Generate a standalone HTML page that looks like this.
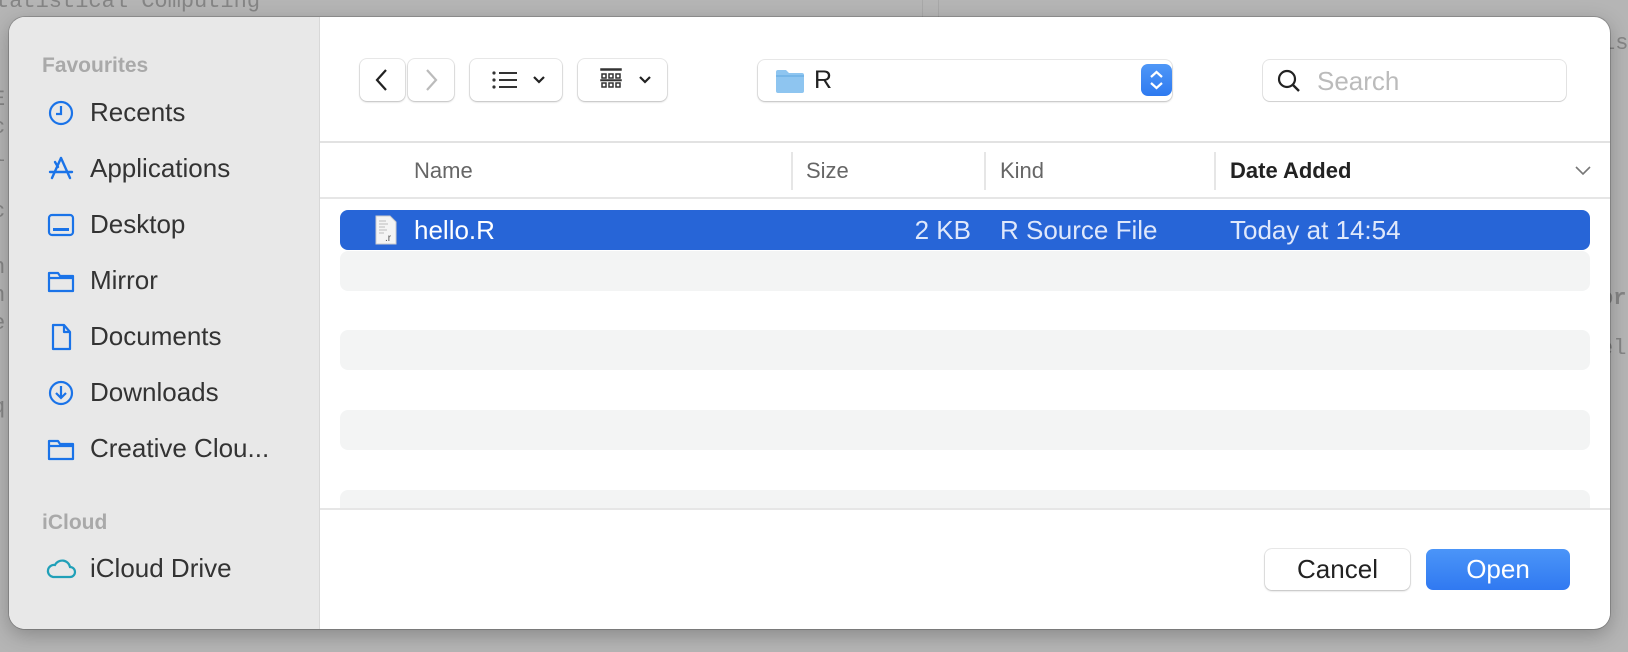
<!DOCTYPE html>
<html><head><meta charset="utf-8"><style>
*{margin:0;padding:0;box-sizing:border-box}
body{width:1628px;height:652px;background:#b5b5b5;position:relative;overflow:hidden;font-family:"Liberation Sans",sans-serif}
.bg{position:absolute;font-family:"Liberation Mono",monospace;color:#858585;font-size:22px;line-height:28px}
.dlg{position:absolute;left:9px;top:17px;width:1601px;height:612px;background:#fff;border-radius:16px;overflow:hidden;box-shadow:0 0 0 1px rgba(0,0,0,.18),0 6px 20px rgba(0,0,0,.25)}
.side{position:absolute;left:0;top:0;width:311px;height:100%;background:#e8e8e8;border-right:1px solid #d8d8d8}
.sh{position:absolute;left:33px;font-size:21px;font-weight:bold;color:#a9a9a9}
.si{position:absolute;left:81px;font-size:26px;color:#333;line-height:30px}
.ic{position:absolute;left:38px;width:28px;height:28px}
.a{position:absolute}
.btn{position:absolute;background:#fff;border-radius:7px;box-shadow:0 0 0 1px rgba(0,0,0,.08),0 1px 2px rgba(0,0,0,.2)}
.hdr{position:absolute;top:141px;font-size:22px;color:#666}
.row{position:absolute;left:331px;width:1250px;height:40px;border-radius:8px}
.rt{position:absolute;top:5px;font-size:26px;color:#dfe8fb}
</style></head><body>
<div class="bg" style="left:-4px;top:-12px">tatistical Computing</div>
<div class="bg" style="left:-8px;top:86px">E<br>c<br>l<br><br>c<br><br>n<br>n<br>e<br><br>,<br>q</div>
<div class="bg" style="left:1602px;top:30px">is</div>
<div class="bg" style="left:1600px;top:285px;font-weight:bold">or</div>
<div class="bg" style="left:1600px;top:335px">el</div>
<div class="a" style="left:922px;top:0;width:1px;height:20px;background:#a8a8a8"></div>
<div class="a" style="left:938px;top:0;width:1px;height:20px;background:#a8a8a8"></div>
<div class="dlg">
 <div class="side">
  <div class="sh" style="top:37px">Favourites</div>
  <svg class="ic" style="top:82px" viewBox="0 0 28 28"><circle cx="14" cy="14" r="11" fill="none" stroke="#1a73e8" stroke-width="2.2"/><path d="M14 7v8h-5" fill="none" stroke="#1a73e8" stroke-width="2.2"/></svg>
  <div class="si" style="top:80px">Recents</div>
  <svg class="ic" style="top:138px" viewBox="0 0 28 28"><path d="M14 3L5 23M14 3l9 20M3 17h22M8 7l3 5" fill="none" stroke="#1a73e8" stroke-width="2.4" stroke-linecap="round"/></svg>
  <div class="si" style="top:136px">Applications</div>
  <svg class="ic" style="top:194px" viewBox="0 0 28 28"><rect x="2" y="4" width="24" height="20" rx="3" fill="none" stroke="#1a73e8" stroke-width="2.2"/><rect x="6" y="17" width="16" height="3" fill="#1a73e8"/></svg>
  <div class="si" style="top:192px">Desktop</div>
  <svg class="ic" style="top:250px" viewBox="0 0 28 28"><path d="M2 6h9l2 3h13v15H2z M2 11h24" fill="none" stroke="#1a73e8" stroke-width="2.2" stroke-linejoin="round"/></svg>
  <div class="si" style="top:248px">Mirror</div>
  <svg class="ic" style="top:306px" viewBox="0 0 28 28"><path d="M6 2h11l6 7v17H6z M17 2v7h6" fill="none" stroke="#1a73e8" stroke-width="2.2" stroke-linejoin="round"/></svg>
  <div class="si" style="top:304px">Documents</div>
  <svg class="ic" style="top:362px" viewBox="0 0 28 28"><circle cx="14" cy="14" r="11" fill="none" stroke="#1a73e8" stroke-width="2.2"/><path d="M14 7v12M9 14l5 5 5-5" fill="none" stroke="#1a73e8" stroke-width="2.2"/></svg>
  <div class="si" style="top:360px">Downloads</div>
  <svg class="ic" style="top:418px" viewBox="0 0 28 28"><path d="M2 6h9l2 3h13v15H2z M2 11h24" fill="none" stroke="#1a73e8" stroke-width="2.2" stroke-linejoin="round"/></svg>
  <div class="si" style="top:416px">Creative Clou...</div>
  <div class="sh" style="top:494px">iCloud</div>
  <svg class="ic" style="top:538px;left:36px;width:32px" viewBox="0 0 32 28"><path d="M8 22h17a5 5 0 0 0 0-10 8 8 0 0 0-15-2 6 6 0 0 0-2 12z" fill="none" stroke="#20a0b8" stroke-width="2.2"/></svg>
  <div class="si" style="top:536px">iCloud Drive</div>
 </div>
 <div class="btn" style="left:351px;top:42px;width:45px;height:42px"><svg width="45" height="42"><path d="M26 11l-9 10 9 10" fill="none" stroke="#222" stroke-width="2.2"/></svg></div>
 <div class="btn" style="left:399px;top:42px;width:46px;height:42px"><svg width="46" height="42"><path d="M19 11l9 10-9 10" fill="none" stroke="#bbb" stroke-width="2.2"/></svg></div>
 <div class="btn" style="left:461px;top:42px;width:92px;height:42px"><svg width="92" height="42"><g fill="#333"><circle cx="24" cy="14" r="1.6"/><circle cx="24" cy="21" r="1.6"/><circle cx="24" cy="28" r="1.6"/><rect x="29" y="13" width="18" height="2"/><rect x="29" y="20" width="18" height="2"/><rect x="29" y="27" width="18" height="2"/></g><path d="M64 18l5 5 5-5" fill="none" stroke="#222" stroke-width="2.2"/></svg></div>
 <div class="btn" style="left:569px;top:42px;width:89px;height:42px"><svg width="89" height="42"><g fill="none" stroke="#333" stroke-width="1.5"><rect x="23" y="10" width="20" height="1" fill="#333"/><rect x="24" y="15" width="4" height="4"/><rect x="31" y="15" width="4" height="4"/><rect x="38" y="15" width="4" height="4"/><rect x="24" y="24" width="4" height="4"/><rect x="31" y="24" width="4" height="4"/><rect x="38" y="24" width="4" height="4"/><rect x="23" y="21" width="20" height="0.5"/></g><path d="M62 18l5 5 5-5" fill="none" stroke="#222" stroke-width="2.2"/></svg></div>
 <div class="btn" style="left:749px;top:43px;width:414px;height:41px">
  <svg class="a" style="left:17px;top:8px" width="30" height="26"><path d="M1 4a2 2 0 0 1 2-2h8l3 3h13a2 2 0 0 1 2 2v16a2 2 0 0 1-2 2H3a2 2 0 0 1-2-2z" fill="#8ec5f0"/><path d="M1 8h28" stroke="#5ea7e0"/></svg>
  <div class="a" style="left:56px;top:6px;font-size:25px;color:#222">R</div>
  <div class="a" style="left:383px;top:4px;width:31px;height:32px;background:linear-gradient(#4f97f7,#2e7af0);border-radius:7px"><svg width="31" height="32"><path d="M10 13l5.5-5 5.5 5M10 19l5.5 5 5.5-5" fill="none" stroke="#fff" stroke-width="2.2"/></svg></div>
 </div>
 <div class="btn" style="left:1254px;top:43px;width:303px;height:41px;box-shadow:0 0 0 1px rgba(0,0,0,.1),0 1px 1px rgba(0,0,0,.1)">
  <svg class="a" style="left:13px;top:8px" width="26" height="26"><circle cx="11" cy="11" r="8" fill="none" stroke="#222" stroke-width="2.2"/><path d="M17 17l6 6" stroke="#222" stroke-width="2.4"/></svg>
  <div class="a" style="left:54px;top:6px;font-size:26px;color:#bbb">Search</div>
 </div>
 <div class="a" style="left:311px;top:124px;width:1290px;height:2px;background:#e2e2e2"></div>
 <div class="hdr" style="left:405px">Name</div>
 <div class="a" style="left:782px;top:135px;width:2px;height:38px;background:#e6e6e6"></div>
 <div class="hdr" style="left:797px">Size</div>
 <div class="a" style="left:975px;top:135px;width:2px;height:38px;background:#e6e6e6"></div>
 <div class="hdr" style="left:991px">Kind</div>
 <div class="a" style="left:1205px;top:135px;width:2px;height:38px;background:#e6e6e6"></div>
 <div class="hdr" style="left:1221px;color:#222;font-weight:bold">Date Added</div>
 <svg class="a" style="left:1565px;top:146px" width="18" height="14"><path d="M2 4l7 7 7-7" fill="none" stroke="#777" stroke-width="1.6"/></svg>
 <div class="a" style="left:311px;top:180px;width:1290px;height:2px;background:#e6e6e6"></div>
 <div class="row" style="top:193px;background:#2765d7">
  <svg class="a" style="left:35px;top:5px" width="22" height="30"><path d="M1 1h14l6 6v22H1z" fill="#f4f4f4" stroke="#ccc"/><g stroke="#bbb"><path d="M4 6h7M4 9h9M4 12h6M4 15h8M4 18h5"/></g><text x="10" y="26" font-size="10" fill="#555" font-family="Liberation Sans">.r</text></svg>
  <div class="rt" style="left:74px;color:#fff">hello.R</div>
  <div class="rt" style="right:619px">2 KB</div>
  <div class="rt" style="left:660px">R Source File</div>
  <div class="rt" style="left:890px">Today at 14:54</div>
 </div>
 <div class="row" style="top:234px;background:#f3f4f4"></div>
 <div class="row" style="top:313px;background:#f3f4f4"></div>
 <div class="row" style="top:393px;background:#f3f4f4"></div>
 <div class="row" style="top:473px;background:#f3f4f4"></div>
 <div class="a" style="left:311px;top:491px;width:1290px;height:118px;background:#fff;border-top:2px solid #e6e6e6"></div>
 <div class="btn" style="left:1256px;top:532px;width:145px;height:41px;font-size:26px;color:#222;text-align:center;line-height:41px">Cancel</div>
 <div class="a" style="left:1417px;top:532px;width:144px;height:41px;border-radius:7px;background:linear-gradient(#4b95f8,#3079f1);font-size:26px;color:#fff;text-align:center;line-height:41px">Open</div>
</div>
</body></html>
